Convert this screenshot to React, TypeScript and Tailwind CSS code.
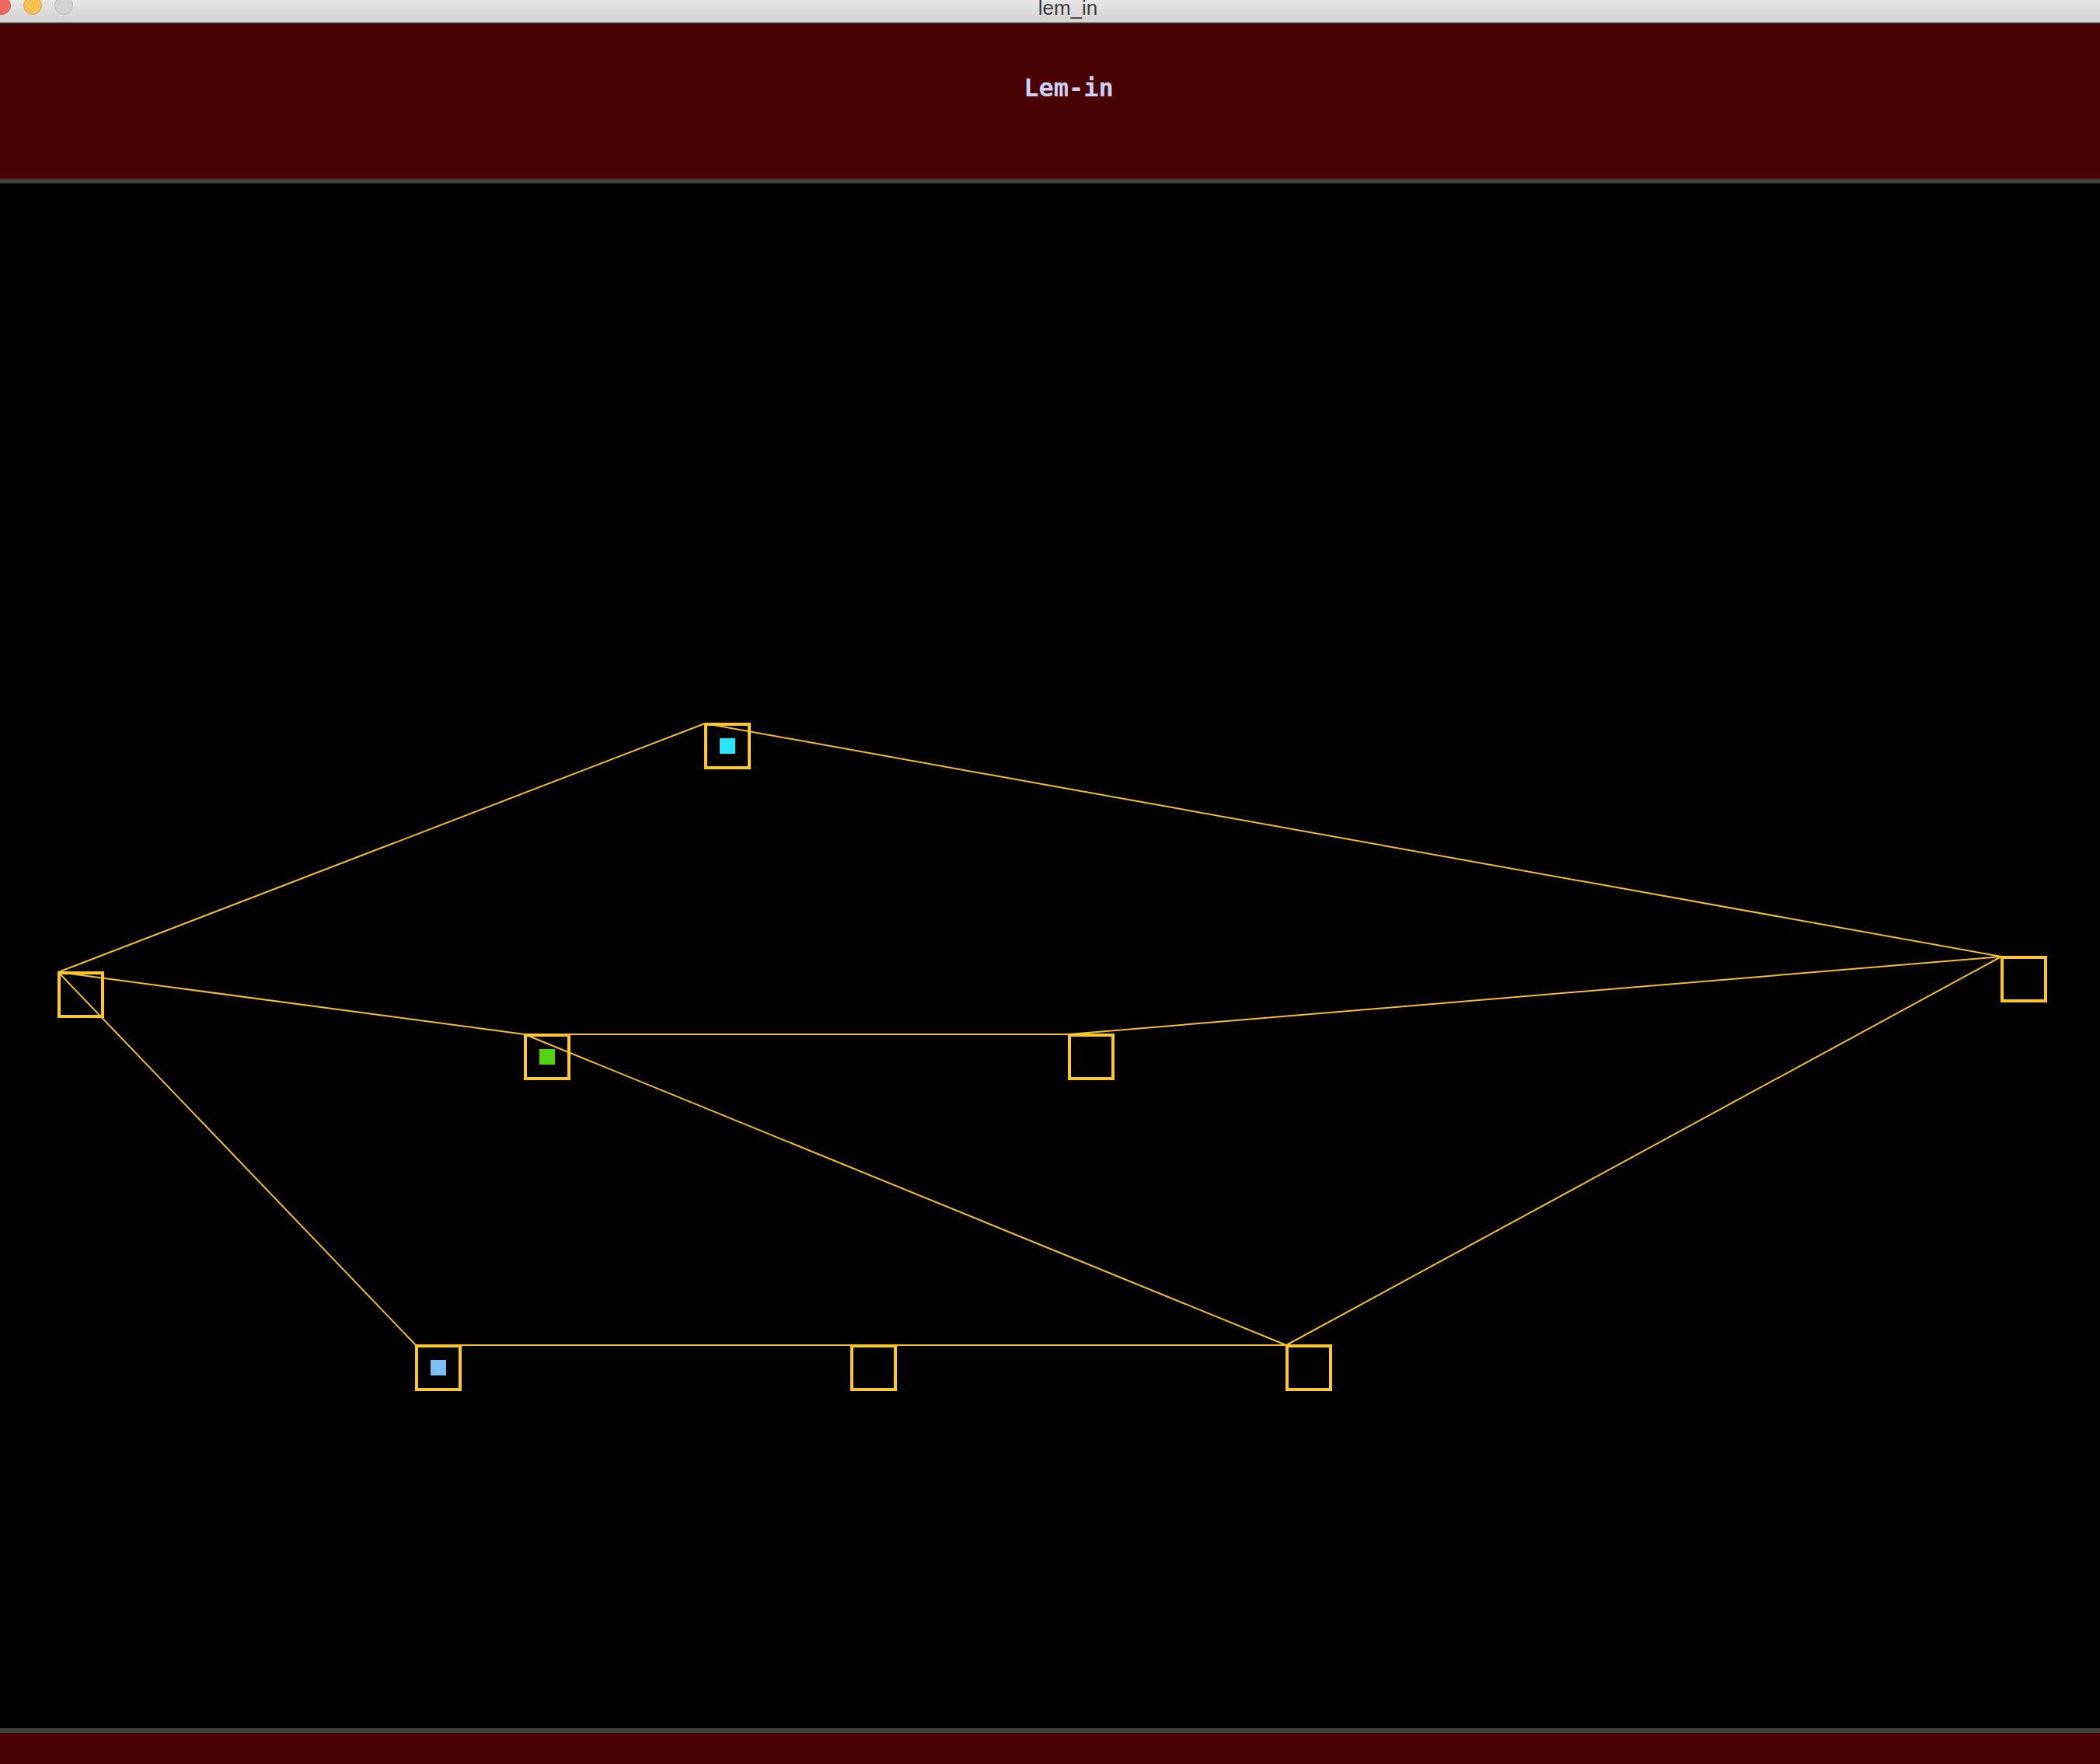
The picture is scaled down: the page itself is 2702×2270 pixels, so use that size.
import React from 'react';

type Room = { id: string; x: number; y: number; ant?: string };

// positions are the top-left corner of each room, relative to the canvas
const rooms: Room[] = [
  { id: 'a', x: 906, y: 694, ant: 'bg-[#29e4fb]' },
  { id: 'b', x: 74, y: 1014 },
  { id: 'c', x: 674, y: 1094, ant: 'bg-[#52d30b]' },
  { id: 'd', x: 534, y: 1494, ant: 'bg-[#7cc0f3]' },
  { id: 'e', x: 2574, y: 994 },
  { id: 'f', x: 1374, y: 1094 },
  { id: 'g', x: 1654, y: 1494 },
  { id: 'h', x: 1094, y: 1494 },
];

const links: [string, string][] = [
  ['b', 'a'],
  ['a', 'e'],
  ['b', 'c'],
  ['c', 'f'],
  ['f', 'e'],
  ['b', 'd'],
  ['c', 'g'],
  ['d', 'h'],
  ['h', 'g'],
  ['g', 'e'],
];

const byId = (id: string) => rooms.find((r) => r.id === id)!;

const TitleBar = () => (
  <div className="relative h-[31px] shrink-0 overflow-hidden bg-gradient-to-b from-[#e8e7e8] to-[#d2d1d2] border-b-2 border-[#2a2a2a]">
    <div className="flex gap-[16px] ml-[-10px] mt-[-5px]">
      <span className="w-[24px] h-[24px] rounded-full bg-[#ee6a5f] border border-[#d65247]" />
      <span className="w-[24px] h-[24px] rounded-full bg-[#f6c24f] border border-[#dda23a]" />
      <span className="w-[24px] h-[24px] rounded-full bg-[#d3d3d3] border border-[#bababa]" />
    </div>
    <div className="absolute inset-x-0 top-[-3px] pl-[46px] text-center text-[26px] leading-[26px] text-[#3b3b3b] font-['Liberation_Sans',Arial,sans-serif]">
      lem_in
    </div>
  </div>
);

export default function App() {
  return (
    <div className="w-[2702px] h-[2270px] flex flex-col bg-black overflow-hidden">
      <TitleBar />

      {/* Header */}
      <header className="h-[205px] shrink-0 bg-[#4a0305] border-b-[6px] border-[#414141] flex justify-center pl-[48px] pt-[66px]">
        <h1 className="text-[32px] leading-none font-bold text-[#c9d1f4] font-['DejaVu_Sans_Mono',monospace]">
          Lem-in
        </h1>
      </header>

      {/* Graph canvas */}
      <main className="relative h-[1988px] shrink-0 bg-black">
        <svg className="absolute inset-0" width={2702} height={1988}>
          {links.map(([from, to]) => {
            const a = byId(from);
            const b = byId(to);
            return (
              <line
                key={from + to}
                x1={a.x + 1}
                y1={a.y + 1}
                x2={b.x + 1}
                y2={b.y + 1}
                stroke="#f5bf2d"
                strokeWidth={2}
              />
            );
          })}
        </svg>
        {rooms.map((r) => (
          <div
            key={r.id}
            className="absolute w-[60px] h-[60px] border-4 border-[#fec62f] flex items-center justify-center"
            style={{ left: r.x, top: r.y }}
          >
            {r.ant && <span className={`w-[20px] h-[20px] ${r.ant}`} />}
          </div>
        ))}
      </main>

      {/* Footer */}
      <footer className="flex-1 bg-[#4a0305] border-t-[6px] border-[#414141]" />
    </div>
  );
}
